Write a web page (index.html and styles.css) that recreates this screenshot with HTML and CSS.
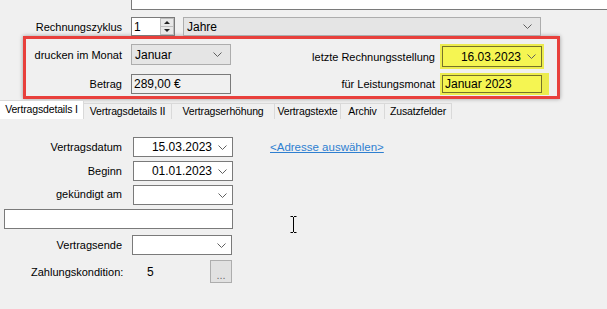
FILE: index.html
```html
<!DOCTYPE html>
<html lang="de">
<head>
  <meta charset="UTF-8" />
  <title>Vertrag</title>
  <link rel="stylesheet" href="styles.css">
</head>
<body>

<div class="top-box"></div>

<div class="cycle-row">
  <span class="lbl">Rechnungszyklus</span>
  <div class="num">
    <span class="num-val">1</span>
    <span class="spin">
      <span class="spin-btn"><i class="arr-up"></i></span>
      <span class="spin-btn"><i class="arr-dn"></i></span>
    </span>
  </div>
  <div class="combo combo-wide">
    <span class="combo-text">Jahre</span>
    <svg class="chev" width="9" height="5" viewBox="0 0 9 5"><polyline points="0.5,0.5 4.5,4.5 8.5,0.5" /></svg>
  </div>
</div>

<div class="marked">
  <div class="mcol mcol-left">
    <div class="mrow mrow-1">
      <span class="lbl">drucken im Monat</span>
      <div class="combo combo-month">
        <span class="combo-text">Januar</span>
        <svg class="chev" width="9" height="5" viewBox="0 0 9 5"><polyline points="0.5,0.5 4.5,4.5 8.5,0.5" /></svg>
      </div>
    </div>
    <div class="mrow mrow-2">
      <span class="lbl">Betrag</span>
      <div class="field field-ro">289,00 €</div>
    </div>
  </div>
  <div class="mcol mcol-right">
    <div class="mrow mrow-1">
      <span class="lbl">letzte Rechnungsstellung</span>
      <div class="date hl hl-top">
        <span class="date-text">16.03.2023</span>
        <svg class="chev" width="9" height="5" viewBox="0 0 9 5"><polyline points="0.5,0.5 4.5,4.5 8.5,0.5" /></svg>
      </div>
    </div>
    <div class="mrow mrow-2">
      <span class="lbl">für Leistungsmonat</span>
      <div class="field hl hl-bottom">Januar 2023</div>
    </div>
  </div>
</div>

<div class="tabs">
  <div class="tab active" style="width:84px">Vertragsdetails I</div>
  <div class="tab" style="width:88px">Vertragsdetails II</div>
  <div class="tab" style="width:103px">Vertragserhöhung</div>
  <div class="tab" style="width:66px">Vertragstexte</div>
  <div class="tab" style="width:44px">Archiv</div>
  <div class="tab" style="width:67px">Zusatzfelder</div>
</div>

<div class="page">
  <div class="prow">
    <span class="lbl">Vertragsdatum</span>
    <div class="date">
      <span class="date-text">15.03.2023</span>
      <svg class="chev" width="9" height="5" viewBox="0 0 9 5"><polyline points="0.5,0.5 4.5,4.5 8.5,0.5" /></svg>
    </div>
    <a class="link" href="#">&lt;Adresse auswählen&gt;</a>
  </div>
  <div class="prow">
    <span class="lbl">Beginn</span>
    <div class="date">
      <span class="date-text">01.01.2023</span>
      <svg class="chev" width="9" height="5" viewBox="0 0 9 5"><polyline points="0.5,0.5 4.5,4.5 8.5,0.5" /></svg>
    </div>
  </div>
  <div class="prow">
    <span class="lbl lbl-up">gekündigt am</span>
    <div class="date">
      <span class="date-text"></span>
      <svg class="chev" width="9" height="5" viewBox="0 0 9 5"><polyline points="0.5,0.5 4.5,4.5 8.5,0.5" /></svg>
    </div>
  </div>
  <div class="prow">
    <div class="field wide"></div>
  </div>
  <div class="prow prow-end">
    <span class="lbl">Vertragsende</span>
    <div class="date date-end">
      <span class="date-text"></span>
      <svg class="chev" width="9" height="5" viewBox="0 0 9 5"><polyline points="0.5,0.5 4.5,4.5 8.5,0.5" /></svg>
    </div>
  </div>
  <div class="prow prow-pay">
    <span class="pay-lbl">Zahlungskondition:</span>
    <span class="pay-val">5</span>
    <button class="dots">...</button>
  </div>

  <svg class="ibeam" width="7" height="17" viewBox="0 0 7 17">
    <path d="M0.5 0.5h2.5M4 0.5h2.5M3.5 1v15M0.5 16.5h2.5M4 16.5h2.5" />
  </svg>
</div>

</body>
</html>
```

FILE: styles.css
```css
* {
  box-sizing: border-box;
}
body {
  margin: 0;
  background: #f0f0f0;
  color: #000;
  font-family: 'Liberation Sans', Arial, sans-serif;
  font-size: 11px;
  overflow: hidden;
}
.lbl {
  text-align: right;
  white-space: nowrap;
}
.chev {
  fill: none;
  stroke: #606060;
  stroke-width: 1;
}

.top-box {
  height: 10px;
  margin-left: 131px;
  background: #fff;
  border-left: 1px solid #7a7a7a;
  border-bottom: 1px solid #7a7a7a;
}

/* Rechnungszyklus */
.cycle-row {
  display: flex;
  align-items: center;
  height: 19px;
  margin-top: 7px;
}
.cycle-row .lbl {
  width: 122px;
  margin-right: 9px;
}
.num {
  display: flex;
  width: 44px;
  height: 19px;
  background: #fff;
  border: 1px solid #7a7a7a;
}
.num-val {
  flex: 1;
  padding: 2px 0 0 2px;
  font-size: 12px;
}
.spin {
  display: flex;
  flex-direction: column;
  width: 14px;
}
.spin-btn {
  flex: 1;
  display: flex;
  align-items: center;
  justify-content: center;
  background: #e8e8e8;
  border: 1px solid #bdbdbd;
}
.spin-btn + .spin-btn {
  border-top: none;
}
.arr-up, .arr-dn {
  width: 0;
  height: 0;
  border-left: 3px solid transparent;
  border-right: 3px solid transparent;
}
.arr-up {
  border-bottom: 3px solid #222;
}
.arr-dn {
  border-top: 3px solid #222;
}
.combo {
  display: flex;
  align-items: center;
  height: 19px;
  padding: 0 8px 0 3px;
  background: #e5e5e5;
  border: 1px solid #adadad;
}
.combo-text {
  flex: 1;
  font-size: 12px;
}
.combo-wide {
  width: 358px;
  margin-left: 8px;
}

/* red marked area */
.marked {
  display: flex;
  width: 537px;
  height: 63px;
  margin-left: 23px;
  border: 3px solid #e8403c;
  box-shadow: 0 0 4px rgba(0, 0, 0, 0.35);
}
.mcol {
  display: flex;
  flex-direction: column;
}
.mcol-left {
  width: 205px;
  padding-top: 5px;
  gap: 9px;
}
.mcol-right {
  flex: 1;
  padding-top: 7px;
  gap: 8px;
}
.mrow {
  display: flex;
  align-items: center;
}
.mcol-left .lbl {
  width: 96px;
  margin-right: 9px;
}
.mcol-right .lbl {
  width: 204px;
  margin-right: 7px;
}
.combo-month {
  width: 100px;
  height: 21px;
}
.field {
  display: flex;
  align-items: center;
  width: 100px;
  height: 20px;
  padding-left: 2px;
  background: #fff;
  border: 1px solid #7a7a7a;
  font-size: 12px;
}
.field-ro {
  background: #f0f0f0;
}

/* tabs */
.tabs {
  display: flex;
  align-items: flex-end;
  height: 20px;
}
.tab {
  height: 16px;
  padding-top: 1px;
  text-align: center;
  white-space: nowrap;
  font-size: 10.5px;
  letter-spacing: -0.15px;
  border: 1px solid #d9d9d9;
  border-bottom: none;
  border-left: none;
}
.tab.active {
  height: 19px;
  padding-top: 2px;
  background: #fff;
}

/* tab page */
.page {
  position: relative;
  padding-top: 18px;
}
.prow {
  display: flex;
  align-items: center;
  height: 20px;
  margin-bottom: 4px;
}
.prow .lbl {
  width: 122px;
  margin-right: 11px;
}
.lbl-up {
  margin-top: -3px;
}
.date {
  display: flex;
  align-items: center;
  width: 100px;
  height: 20px;
  background: #fff;
  border: 1px solid #7a7a7a;
  font-size: 12px;
}
.date-text {
  flex: 1;
  text-align: right;
  padding-right: 6px;
}
.date .chev {
  margin-right: 5px;
}
.date-end {
  margin-left: -1px;
}

/* yellow marker over the two fields */
.hl {
  background: #f5f552;
  border-color: #76722a;
}
.hl-top {
  height: 21px;
  box-shadow: 0 0 0 2px #ecec4e;
}
.hl-bottom {
  height: 18px;
  box-shadow: 0 0 0 2px #ecec4e, 5px 0 0 2px #ecec4e;
}

.link {
  margin-left: 37px;
  color: #2e7fd0;
  font-size: 11.5px;
}
.wide {
  width: 229px;
  margin-left: 4px;
}
.prow-end {
  margin-top: 6px;
  margin-bottom: 5px;
}
.prow-pay {
  height: 23px;
}
.pay-lbl {
  margin-left: 31px;
  width: 116px;
}
.pay-val {
  width: 63px;
  font-size: 12px;
}
.dots {
  width: 22px;
  height: 23px;
  padding: 8px 0 0;
  background: #e1e1e1;
  border: 1px solid #adadad;
  color: #6d6d6d;
  font-family: inherit;
  font-size: 11px;
  line-height: 1;
}
.ibeam {
  position: absolute;
  left: 290px;
  top: 97px;
  fill: none;
  stroke: #000;
  stroke-width: 1;
}
```
